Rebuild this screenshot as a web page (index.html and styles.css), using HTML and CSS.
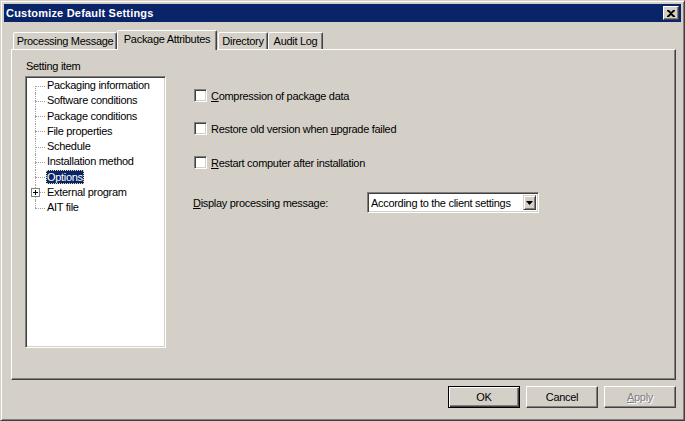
FILE: index.html
```html
<!DOCTYPE html>
<html>
<head>
<meta charset="utf-8">
<link rel="stylesheet" href="styles.css">
</head>
<body>
<div class="window">
  <div class="titlebar">
    <span class="title">Customize Default Settings</span>
    <span class="close-btn"><svg width="8" height="7" viewBox="0 0 8 7"><path d="M0 0h2l2 2 2-2h2v1L5 3.5 8 6v1H6L4 5 2 7H0V6l3-2.5L0 1z" fill="#000"/></svg></span>
  </div>
  <div class="tabs">
    <div class="tab tab-pm">Processing Message</div>
    <div class="tab tab-pa active">Package Attributes</div>
    <div class="tab tab-dir">Directory</div>
    <div class="tab tab-al">Audit Log</div>
  </div>
  <div class="panel">
    <div class="left-col">
      <div class="group-label">Setting item</div>
      <div class="tree">
        <ul class="tree-list">
          <li class="node first"><span class="node-text">Packaging information</span></li>
          <li class="node"><span class="node-text">Software conditions</span></li>
          <li class="node"><span class="node-text">Package conditions</span></li>
          <li class="node"><span class="node-text">File properties</span></li>
          <li class="node"><span class="node-text">Schedule</span></li>
          <li class="node"><span class="node-text">Installation method</span></li>
          <li class="node"><span class="node-text selected">Options</span></li>
          <li class="node"><span class="expander"></span><span class="node-text">External program</span></li>
          <li class="node last"><span class="node-text">AIT file</span></li>
        </ul>
      </div>
    </div>
    <div class="options">
      <div class="check-row"><span class="checkbox"></span><span class="check-label"><u>C</u>ompression of package data</span></div>
      <div class="check-row"><span class="checkbox"></span><span class="check-label">Restore old version when <u>u</u>pgrade failed</span></div>
      <div class="check-row row3"><span class="checkbox"></span><span class="check-label"><u>R</u>estart computer after installation</span></div>
      <div class="display-row">
        <span class="display-label"><u>D</u>isplay processing message:</span>
        <div class="combo">
          <span class="combo-text">According to the client settings</span>
          <span class="combo-btn"><svg width="7" height="4" viewBox="0 0 7 4"><path d="M0 0h7L3.5 4z" fill="#000"/></svg></span>
        </div>
      </div>
    </div>
  </div>
  <div class="buttons">
    <div class="btn default"><span>OK</span></div>
    <div class="btn">Cancel</div>
    <div class="btn disabled"><u>A</u>pply</div>
  </div>
</div>
</body>
</html>
```
FILE: styles.css
```css
html, body {
  margin: 0;
  padding: 0;
  background: #d4d0c8;
}
body {
  font-family: "Liberation Sans", Arial, sans-serif;
  font-size: 11px;
  letter-spacing: -0.3px;
  color: #000;
}
.window {
  width: 685px;
  height: 421px;
  box-sizing: border-box;
  background: #d4d0c8;
  border: 1px solid;
  border-color: #d4d0c8 #404040 #404040 #d4d0c8;
  box-shadow: inset 1px 1px #ffffff, inset -1px -1px #808080;
  padding: 3px;
  display: flex;
  flex-direction: column;
}
.titlebar {
  height: 18px;
  background: #0a246a;
  display: flex;
  align-items: center;
  justify-content: space-between;
  padding: 0 2px 0 2px;
}
.title {
  color: #fff;
  font-weight: bold;
  font-size: 11px;
  letter-spacing: 0.2px;
}
.close-btn {
  width: 16px;
  height: 14px;
  box-sizing: border-box;
  background: #d4d0c8;
  border: 1px solid;
  border-color: #fff #404040 #404040 #fff;
  box-shadow: inset -1px -1px #808080;
  display: flex;
  align-items: center;
  justify-content: center;
}
.close-btn svg { display: block; margin-left: -1px; }
.tabs {
  display: flex;
  align-items: flex-end;
  height: 19px;
  margin-top: 8px;
  padding-left: 9px;
  position: relative;
  z-index: 2;
}
.tab {
  height: 17px;
  box-sizing: border-box;
  border: 1px solid;
  border-bottom: none;
  border-color: #fff #404040 transparent #fff;
  box-shadow: inset -1px 0 #808080;
  border-radius: 2px 2px 0 0;
  text-align: center;
  line-height: 16px;
  background: #d4d0c8;
}
.tab-pm { width: 104px; }
.tab-pa { width: 100px; }
.tab-dir { width: 50px; margin-left: 1px; }
.tab-al { width: 55px; }
.tab.active {
  height: 20px;
  margin-bottom: -1px;
  line-height: 17px;
}
.panel {
  margin: 0 5px 0 7px;
  height: 331px;
  box-sizing: border-box;
  border: 1px solid;
  border-color: #fff #404040 #404040 #fff;
  box-shadow: inset -1px -1px #808080;
  display: flex;
  padding: 10px 0 0 13px;
}
.left-col {
  width: 141px;
  display: flex;
  flex-direction: column;
}
.group-label {
  height: 13px;
  line-height: 13px;
  margin-left: 1px;
  margin-bottom: 3px;
}
.tree {
  height: 272px;
  box-sizing: border-box;
  background: #fff;
  border: 1px solid;
  border-color: #808080 #fff #fff #808080;
  box-shadow: inset 1px 1px #404040, inset -1px -1px #d4d0c8;
  padding: 1px;
}
.tree-list {
  list-style: none;
  margin: 0;
  padding: 0;
}
.node {
  position: relative;
  height: 15.25px;
  line-height: 15px;
  padding-left: 19px;
}
.node::before {
  content: "";
  position: absolute;
  left: 8px;
  width: 10px;
  top: 50%;
  border-top: 1px dotted #a0a0a0;
}
.node::after {
  content: "";
  position: absolute;
  left: 8px;
  top: 0;
  bottom: 0;
  border-left: 1px dotted #a0a0a0;
}
.node.first::after { top: 50%; }
.node.last::after { bottom: 50%; }
.node-text {
  padding: 1px 1px;
}
.node-text.selected {
  background: #0a246a;
  color: #fff;
  outline: 1px dotted #e8e08a;
  outline-offset: -1px;
}
.expander {
  position: absolute;
  left: 4px;
  top: 3px;
  width: 9px;
  height: 9px;
  box-sizing: border-box;
  border: 1px solid #808080;
  background: #fff;
  z-index: 1;
}
.expander::before {
  content: "";
  position: absolute;
  left: 1px;
  top: 3px;
  width: 5px;
  height: 1px;
  background: #000;
}
.expander::after {
  content: "";
  position: absolute;
  left: 3px;
  top: 1px;
  width: 1px;
  height: 5px;
  background: #000;
}
.options {
  margin-left: 28px;
  padding-top: 29px;
  display: flex;
  flex-direction: column;
}
.check-row {
  display: flex;
  align-items: center;
  height: 13px;
  margin-bottom: 20px;
}
.check-row.row3 { margin-top: 1px; margin-bottom: 23px; }
.checkbox {
  width: 13px;
  height: 13px;
  box-sizing: border-box;
  background: #fff;
  border: 1px solid;
  border-color: #808080 #fff #fff #808080;
  box-shadow: inset 1px 1px #404040, inset -1px -1px #d4d0c8;
  margin-right: 4px;
  flex: none;
}
.display-row {
  display: flex;
  align-items: center;
  height: 21px;
  margin-left: -1px;
}
.display-label {
  width: 174px;
}
.combo {
  width: 172px;
  height: 21px;
  box-sizing: border-box;
  background: #fff;
  border: 1px solid;
  border-color: #808080 #fff #fff #808080;
  box-shadow: inset 1px 1px #404040, inset -1px -1px #d4d0c8;
  padding: 2px 2px 2px 3px;
  display: flex;
  align-items: center;
  justify-content: space-between;
}
.combo-btn {
  width: 13px;
  height: 15px;
  box-sizing: border-box;
  background: #d4d0c8;
  border: 1px solid;
  border-color: #d4d0c8 #404040 #404040 #d4d0c8;
  box-shadow: inset 1px 1px #fff, inset -1px -1px #808080;
  display: flex;
  align-items: center;
  justify-content: center;
}
.combo-btn svg { display: block; }
.buttons {
  display: flex;
  justify-content: flex-end;
  gap: 6px;
  margin: 6px 5px 0 0;
}
.btn {
  width: 72px;
  height: 22px;
  box-sizing: border-box;
  border: 1px solid;
  border-color: #fff #404040 #404040 #fff;
  box-shadow: inset -1px -1px #808080;
  display: flex;
  align-items: center;
  justify-content: center;
}
.btn.default {
  border: 1px solid #000;
  box-shadow: inset 1px 1px #fff, inset -1px -1px #404040, inset -2px -2px #808080;
}
.btn.disabled {
  color: #808080;
  text-shadow: 1px 1px #fff;
}
```
